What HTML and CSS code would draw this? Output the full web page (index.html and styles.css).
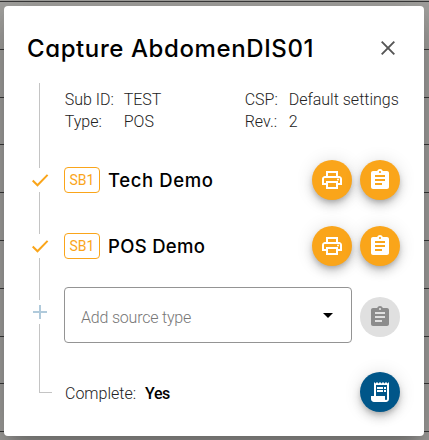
FILE: index.html
```
<!DOCTYPE html>
<html lang="en">
<head>
<meta charset="utf-8">
<title>Capture AbdomenDIS01</title>
<link rel="stylesheet" href="styles.css">
</head>
<body>
<svg class="defs" width="0" height="0">
  <symbol id="print" viewBox="0 0 24 24"><path d="M19 8h-1V3H6v5H5c-1.66 0-3 1.34-3 3v6h4v4h12v-4h4v-6c0-1.66-1.34-3-3-3zM8 5h8v3H8V5zm8 12v2H8v-4h8v4zm2-2v-2H6v2H4v-4c0-.55.45-1 1-1h14c.55 0 1 .45 1 1v4h-2z"/><circle cx="18" cy="11.5" r="1"/></symbol>
  <symbol id="clip" viewBox="0 0 24 24"><path d="M19 3h-4.18C14.4 1.84 13.3 1 12 1c-1.3 0-2.4.84-2.82 2H5c-1.1 0-2 .9-2 2v14c0 1.1.9 2 2 2h14c1.1 0 2-.9 2-2V5c0-1.1-.9-2-2-2zm-7 0c.55 0 1 .45 1 1s-.45 1-1 1-1-.45-1-1 .45-1 1-1zm2 14H7v-2h7v2zm3-4H7v-2h10v2zm0-4H7V7h10v2z"/></symbol>
  <symbol id="receipt" viewBox="0 0 24 24"><path d="M19.5 3.5L18 2l-1.5 1.5L15 2l-1.5 1.5L12 2l-1.5 1.5L9 2 7.5 3.5 6 2v14H3v3c0 1.66 1.34 3 3 3h12c1.66 0 3-1.34 3-3V2l-1.5 1.5zM19 19c0 .55-.45 1-1 1s-1-.45-1-1v-3H8V5h11v14z"/><path d="M9 7h6v2H9zM16 7h2v2h-2zM9 10h6v2H9zM16 10h2v2h-2z"/></symbol>
  <symbol id="check" viewBox="0 0 24 24"><path d="M4.7 12.5l4.8 4.8L19.6 6.9" fill="none" stroke="currentColor" stroke-width="2"/></symbol>
</svg>
<main class="dialog">
  <header class="header">
    <h1 class="title">Capture AbdomenDIS01</h1>
    <svg class="close" viewBox="0 0 14 14"><path d="M.7.7l12.6 12.6M13.3.7L.7 13.3"/></svg>
  </header>
  <div class="body">
    <div class="rail">
      <span class="line line-info"></span>
      <svg class="mark"><use href="#check"/></svg>
      <span class="line line-step"></span>
      <svg class="mark"><use href="#check"/></svg>
      <span class="line line-step"></span>
      <svg class="mark plus" viewBox="0 0 24 24"><path d="M12 5v14M5 12h14"/></svg>
      <span class="line line-end"></span>
    </div>
    <div class="content">
      <dl class="info">
        <dt>Sub ID:</dt><dd>TEST</dd><dt>CSP:</dt><dd>Default settings</dd>
        <dt>Type:</dt><dd>POS</dd><dt>Rev.:</dt><dd>2</dd>
      </dl>
      <div class="row">
        <span class="badge">SB1</span><h2 class="name tech">Tech Demo</h2>
        <button class="fab"><svg class="icon"><use href="#print"/></svg></button>
        <button class="fab"><svg class="icon"><use href="#clip"/></svg></button>
      </div>
      <div class="row">
        <span class="badge">SB1</span><h2 class="name">POS Demo</h2>
        <button class="fab"><svg class="icon"><use href="#print"/></svg></button>
        <button class="fab"><svg class="icon"><use href="#clip"/></svg></button>
      </div>
      <div class="row add">
        <div class="select"><span class="placeholder">Add source type</span><span class="arrow"></span></div>
        <button class="fab disabled"><svg class="icon"><use href="#clip"/></svg></button>
      </div>
      <div class="row done">
        <span class="complete">Complete:</span><strong class="yes">Yes</strong>
        <button class="fab blue"><svg class="icon"><use href="#receipt"/></svg></button>
      </div>
    </div>
  </div>
</main>
</body>
</html>
```
FILE: styles.css
```
* { box-sizing: border-box; }
body {
  margin: 0;
  width: 429px;
  height: 440px;
  padding: 6px 5px 4px 4px;
  overflow: hidden;
  background: repeating-linear-gradient(to bottom, #3a3a3a 0, #3a3a3a 1px, #a3a29f 1px, #a3a29f 47.8px) 0 1px;
  font: 300 16px/22px Roboto, sans-serif;
  color: #222;
}
.defs { position: absolute; }
.dialog {
  width: 420px;
  height: 430px;
  background: #fff;
  border-radius: 4px;
  box-shadow: 0 11px 15px -7px rgba(0,0,0,.2), 0 24px 38px 3px rgba(0,0,0,.14), 0 9px 46px 8px rgba(0,0,0,.12);
}
.header {
  display: flex;
  justify-content: space-between;
  align-items: center;
  height: 77px;
  padding: 7px 29px 0 23px;
}
.title, .name {
  margin: 0;
  font-family: Inter, sans-serif;
  font-weight: 500;
  font-feature-settings: "cv11";
  color: #000;
  white-space: nowrap;
}
.title { padding-top: 2px; font-size: 24px; line-height: 36px; letter-spacing: 0.6px; }
.close { width: 14px; height: 14px; fill: none; stroke: #555; stroke-width: 1.9; }
.body { display: flex; gap: 12px; padding: 0 24px; }
.rail { width: 24px; display: flex; flex-direction: column; }
.line { margin-left: 11px; width: 1px; background: #c4c4c4; }
.line-info { height: 85px; }
.line-step { height: 42px; }
.line-end { width: 13px; height: 69px; background: none; border: solid #c4c4c4; border-width: 0 0 1px 1px; }
.mark { display: block; width: 24px; height: 24px; color: #faa51a; }
.plus { fill: none; stroke: #b0cadb; stroke-width: 2; }
.content { width: 336px; }
.info {
  display: grid;
  grid-template-columns: 59px 121px 44px 1fr;
  height: 64px;
  margin: 0;
  padding: 6px 0 14px 0.7px;
  white-space: nowrap;
}
.info dd { margin: 0; }
.row { display: flex; align-items: center; gap: 8px; height: 66px; }
.badge {
  width: 36px;
  height: 26px;
  border: 1px solid #faa51a;
  border-radius: 4px;
  color: #faa51a;
  font-size: 14px;
  font-weight: 400;
  line-height: 25px;
  text-align: center;
}
.name { flex: 1; font-size: 18.5px; line-height: 26px; letter-spacing: 0.3px; }
.tech { letter-spacing: 0.6px; }
.fab {
  display: flex;
  align-items: center;
  justify-content: center;
  width: 40px;
  height: 40px;
  padding: 0;
  border: 0;
  border-radius: 50%;
  background: #faa51a;
  color: #fff;
  box-shadow: 0 3px 5px -1px rgba(0,0,0,.2), 0 6px 10px rgba(0,0,0,.14), 0 1px 18px rgba(0,0,0,.12);
}
.icon { width: 24px; height: 24px; fill: currentColor; }
.add { height: 76px; }
.select {
  display: flex;
  align-items: center;
  justify-content: space-between;
  width: 288px;
  height: 56px;
  margin-bottom: 4px;
  padding: 5px 18px 0 16px;
  border: 1px solid #949494;
  border-radius: 4px;
}
.placeholder { color: #777; letter-spacing: -0.2px; }
.arrow { border: 5px solid transparent; border-top-color: #000; border-bottom: 0; margin-top: -5px; }
.disabled { background: #e0e0e0; color: #8c8c8c; box-shadow: none; }
.blue { background: #005689; margin-left: auto; }
.done { height: 74px; }
.complete, .yes { padding: 4px 0 0 1px; }
.yes { color: #000; font-weight: 500; letter-spacing: -0.4px; }
```
